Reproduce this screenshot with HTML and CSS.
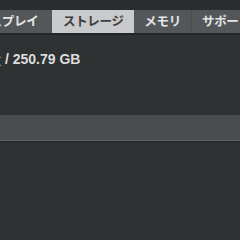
FILE: index.html
```html
<!DOCTYPE html>
<html lang="ja">
<head>
<meta charset="utf-8">
<link rel="stylesheet" href="styles.css">
</head>
<body>
<div class="window">
  <div class="toolbar">
    <nav class="tabs">
      <div class="tab first">ディスプレイ</div>
      <div class="tab active">ストレージ</div>
      <div class="tab">メモリ</div>
      <div class="tab">サポート</div>
    </nav>
  </div>
  <div class="divider"></div>
  <section class="storage">
    <div class="summary"><span class="lead">空き容量</span> / 250.79 GB</div>
    <div class="bar"></div>
  </section>
</div>
</body>
</html>
```
FILE: styles.css
```css
html, body {
  margin: 0;
  padding: 0;
  background: #2f3233;
  overflow: hidden;
}
.window {
  width: 240px;
  height: 240px;
  overflow: hidden;
  font-family: "Noto Sans CJK JP", "Liberation Sans", sans-serif;
}
.toolbar {
  background: #2a2c2d;
  padding-top: 10px;
}
.tabs {
  display: flex;
  height: 23px;
  background: #545759;
  white-space: nowrap;
}
.tab {
  flex: none;
  display: flex;
  align-items: center;
  justify-content: center;
  padding: 0 10px;
  font-size: 12.5px;
  font-weight: 600;
  letter-spacing: -0.3px;
  color: #e4e5e6;
  border-right: 1px solid #4a4d4f;
  line-height: 1;
}
.tab.first {
  margin-left: -44px;
  padding-right: 14px;
  border-right: none;
}
.tab.active {
  background: #c9cacb;
  color: #3c3e40;
  width: 82px;
  padding: 0;
  border-right: none;
}
.divider {
  height: 2px;
  background: #232526;
}
.storage {
  padding-top: 15px;
}
.summary {
  margin-left: -55px;
  font-family: "Liberation Sans", "Noto Sans CJK JP", sans-serif;
  font-size: 14px;
  font-weight: 700;
  color: #dcdddd;
  white-space: nowrap;
  height: 17px;
  line-height: 17px;
}
.lead {
  font-family: "Noto Sans CJK JP", sans-serif;
}
.bar {
  margin-top: 48px;
  height: 25px;
  background: #4a4d4f;
  border-bottom: 1px solid #5c5f61;
  box-shadow: 0 2px 0 #27292a;
}
```
